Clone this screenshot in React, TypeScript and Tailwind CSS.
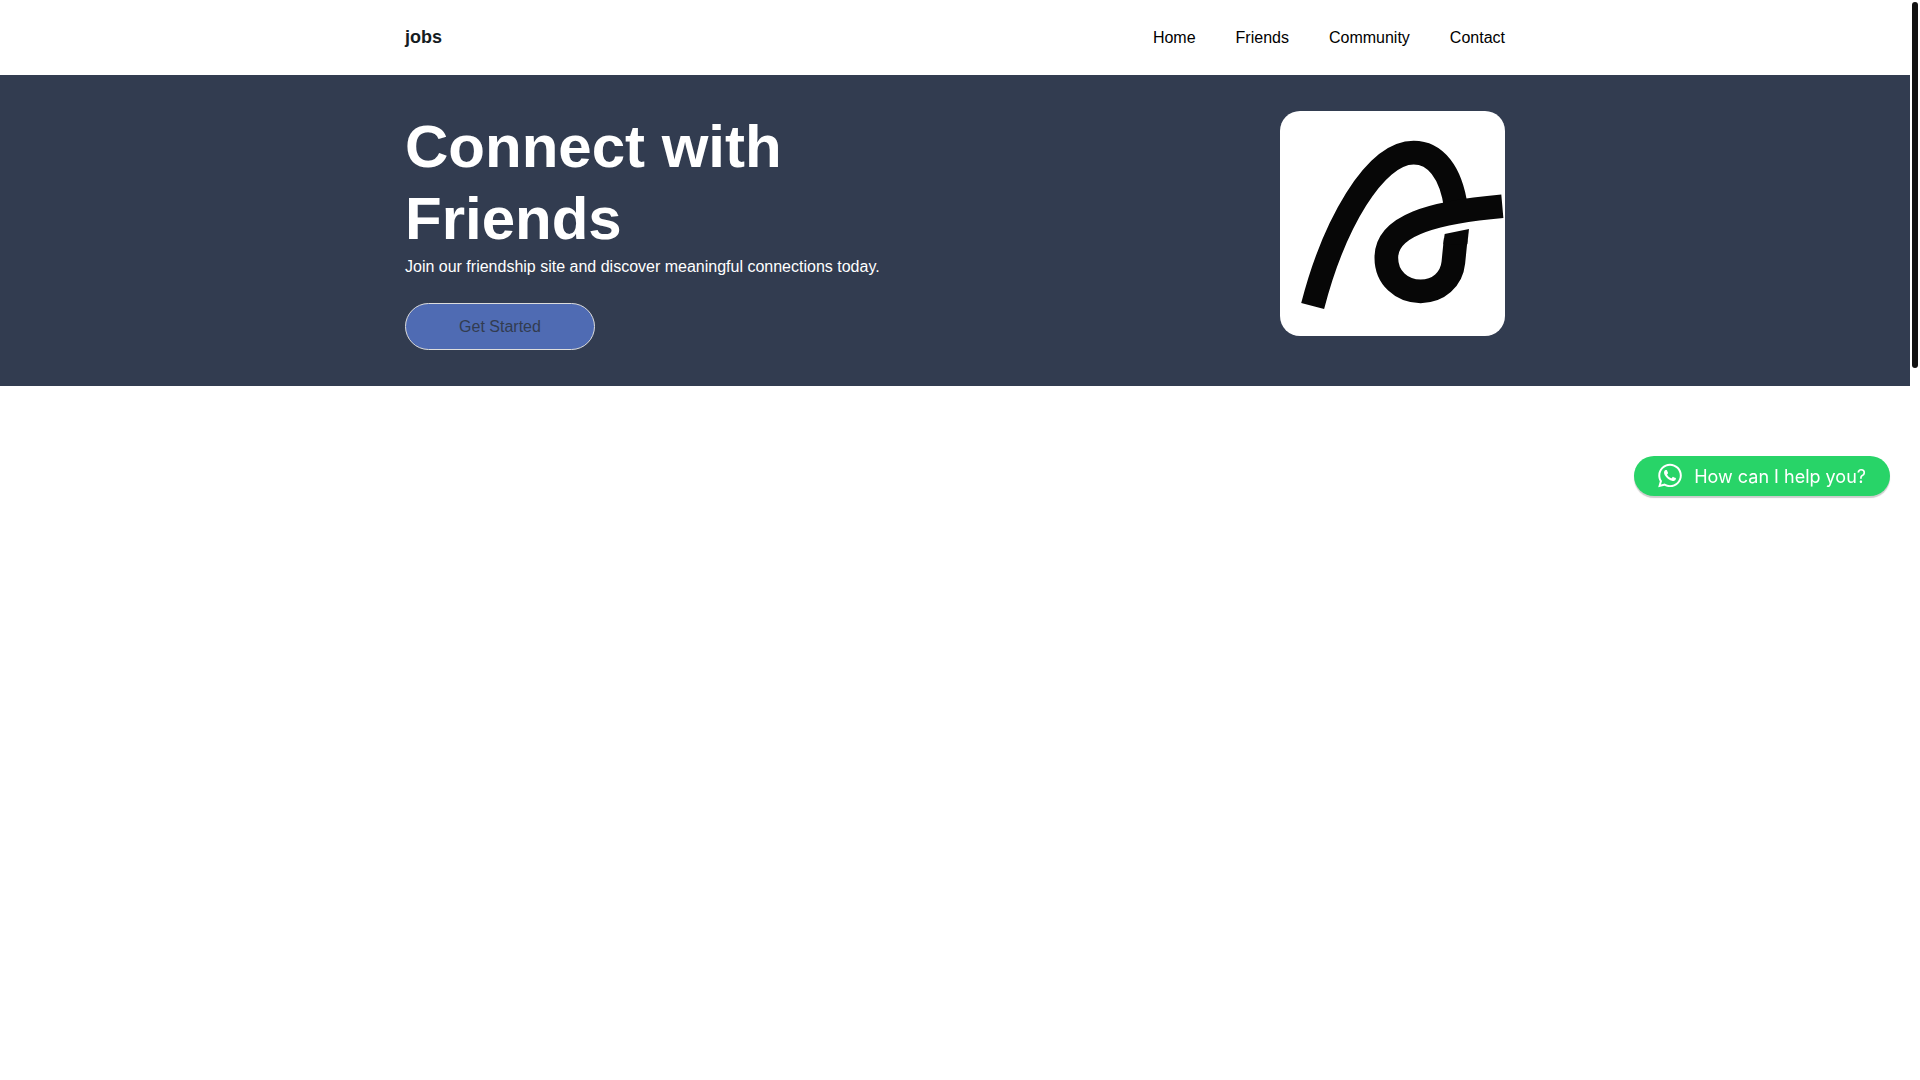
import { FaWhatsapp } from "react-icons/fa";

const links = ["Home", "Friends", "Community", "Contact"];

function Logo() {
  return (
    <svg
      viewBox="0 0 675 675"
      className="w-[225px] h-[225px] shrink-0 rounded-[20px] bg-white"
      role="img"
      aria-label="Friends logo"
    >
      <g fill="none" stroke="#070707" strokeWidth="71">
        <path d="M98 585C160 345 283 125 401 125C465 125 513 182 528 290" />
        <path d="M667 286C450 305 319 345 319 440C319 500 365 541 422 541C475 541 515 505 520 455L527 385" />
      </g>
      <path d="M494 369L567 354L562 400L490 400Z" fill="#070707" />
    </svg>
  );
}

export default function App() {
  return (
    <div className="flex bg-white font-['Liberation_Sans',Arial,sans-serif]">
      <div className="flex-1">
        {/* Header */}
        <header className="px-4">
          <div className="max-w-[1100px] h-[75px] mx-auto flex items-center justify-between">
            <a href="#" className="text-lg leading-6 pb-0.5 font-bold text-[#151c22]">
              jobs
            </a>
            <nav className="flex gap-10">
              {links.map((link) => (
                <a key={link} href="#" className="text-base text-black">
                  {link}
                </a>
              ))}
            </nav>
          </div>
        </header>

        {/* Hero */}
        <section className="bg-[#323c50] px-4 py-9">
          <div className="max-w-[1100px] mx-auto flex items-start justify-between">
            <div className="max-w-[500px]">
              <h1 className="text-6xl leading-[72px] font-bold text-white">
                Connect with Friends
              </h1>
              <p className="text-base text-white">
                Join our friendship site and discover meaningful connections today.
              </p>
              <button className="mt-6 w-[190px] h-[47px] rounded-3xl border border-[#dddddd] bg-[#4f6bb3] text-base text-[#323c50]">
                Get Started
              </button>
            </div>
            <Logo />
          </div>
        </section>
      </div>

      {/* Scrollbar */}
      <div className="w-[10px] shrink-0 px-0.5 pt-0.5">
        <div className="h-[366px] rounded-full bg-[#111111]" />
      </div>

      {/* Chat button */}
      <a
        href="#"
        className="fixed top-[456px] right-[30px] h-10 px-6 flex items-center gap-3 rounded-full bg-[#28d468] text-white shadow-[0_2px_1px_rgba(0,0,0,0.2)]"
      >
        <FaWhatsapp className="w-6 h-7 pb-px" />
        <span className="pt-0.5 text-lg font-normal font-['Inter',sans-serif]">
          How can I help you?
        </span>
      </a>
    </div>
  );
}
